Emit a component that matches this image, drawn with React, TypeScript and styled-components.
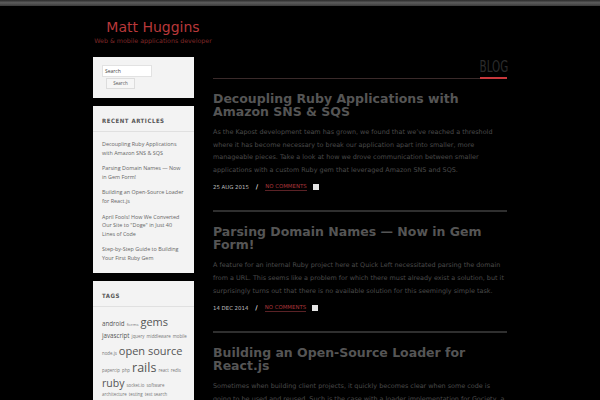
import React from 'react'
import styled, { createGlobalStyle } from 'styled-components'

const Global = createGlobalStyle`
  html, body {
    margin: 0;
    padding: 0;
    background: #000;
  }
  body {
    font-family: 'DejaVu Sans', sans-serif;
  }
`

const TopBar = styled.div`
  height: 6px;
  background: linear-gradient(180deg, #2a2a2a 0%, #5c5c5c 45%, #3a3a3a 100%);
`

const Page = styled.div`
  width: 414px;
  margin: 0 auto;
`

const Header = styled.header`
  width: 120px;
  padding-top: 11px;
  text-align: center;
`

const SiteTitle = styled.h1`
  margin: 0;
  font: 400 14px/20px 'DejaVu Sans', sans-serif;
  color: #b8383a;
`

const Tagline = styled.p`
  margin: 0;
  font: 400 6.3px/8px 'DejaVu Sans', sans-serif;
  color: #7e2828;
`

const Body = styled.div`
  display: flex;
  gap: 19px;
  padding-top: 12px;
`

const Sidebar = styled.aside`
  width: 101px;
  flex-shrink: 0;
  display: flex;
  flex-direction: column;
  gap: 8px;
`

const Widget = styled.section<{ $pad?: string }>`
  background: #f3f3f3;
  padding: ${({ $pad }) => $pad || '8px 9px'};
`

const SearchInput = styled.div`
  width: 46px;
  height: 10px;
  background: #fff;
  border: 1px solid #e2e2e2;
  font: 400 5px/10px 'Open Sans', sans-serif;
  color: #444;
  padding-left: 2px;
`

const SearchButton = styled.div`
  margin: 1px 0 0 4px;
  width: 27px;
  height: 9px;
  border: 1px solid #ddd;
  background: #f6f6f6;
  font: 400 4.6px/9px 'Open Sans', sans-serif;
  color: #555;
  text-align: center;
`

const WidgetTitle = styled.h3`
  margin: 0 -9px;
  padding: 11px 9px 6px;
  border-bottom: 1px solid #e0e0e0;
  font: 700 6px/8px 'DejaVu Sans Condensed', 'DejaVu Sans', sans-serif;
  font-stretch: condensed;
  letter-spacing: 0.55px;
  text-transform: uppercase;
  color: #555;
`

const ArticleList = styled.ul`
  list-style: none;
  margin: 0;
  padding: 8px 0 4px;
  display: flex;
  flex-direction: column;
  gap: 7px;
`

const ArticleLink = styled.li`
  font: 400 5.4px/8.6px 'Open Sans', sans-serif;
  color: #666;
`

const TagCloud = styled.div`
  padding: 9px 0 0;
  font-family: 'Open Sans', sans-serif;
  color: #555;
  line-height: 0;
`

const TagLine = styled.div<{ $h: number }>`
  height: ${({ $h }) => $h}px;
  display: flex;
  align-items: baseline;
  gap: 2px;
  white-space: nowrap;
`

const Tag = styled.span<{ $size: number }>`
  font-size: ${({ $size }) => $size}px;
  line-height: 1;
  color: ${({ $size }) => ($size < 5 ? '#777' : '#555')};
`

const Main = styled.main`
  flex: 1;
  min-width: 0;
`

const BlogHeader = styled.div`
  display: flex;
  justify-content: flex-end;
  border-bottom: 1px solid #3a2a2a;
`

const BlogLabel = styled.h2`
  margin: 0 0 -1px;
  width: 27px;
  border-bottom: 2px solid #c8383c;
  padding-bottom: 1px;
  font: 400 16px/19px 'DejaVu Sans Condensed', 'DejaVu Sans', sans-serif;
  color: #2c2c2c;
  text-align: center;
  white-space: nowrap;
  & > span {
    display: inline-block;
    transform: scaleX(0.72);
    transform-origin: center;
    margin: 0 -6px;
  }
`

const Post = styled.article<{ $last?: boolean }>`
  padding: 14px 0 19px;
  border-bottom: ${({ $last }) => ($last ? 'none' : '2px solid #2f2f2f')};
`

const PostTitle = styled.h2`
  margin: 0;
  font: 700 12.5px/12.5px 'DejaVu Sans', sans-serif;
  color: #555;
`

const Excerpt = styled.p`
  margin: 8px 0 0;
  font: 400 6.45px/12.6px 'DejaVu Sans', sans-serif;
  color: #4a4a4a;
`

const Meta = styled.div`
  margin-top: 7px;
  display: flex;
  align-items: center;
  gap: 4px;
  font: 400 5.4px/8px 'DejaVu Sans', sans-serif;
  text-transform: uppercase;
  color: #bbb;
`

const Slash = styled.span`
  color: #ddd;
  font-weight: 700;
  font-size: 6.5px;
  padding: 0 3px;
`

const Comments = styled.span`
  color: #a8353a;
  border-bottom: 1px solid #5a2226;
  line-height: 7px;
`

const CommentIcon = styled.span`
  display: inline-block;
  width: 6px;
  height: 6px;
  background: #e4e4e4;
  margin-left: 2px;
`

const articles = [
  'Decoupling Ruby Applications with Amazon SNS & SQS',
  'Parsing Domain Names — Now in Gem Form!',
  'Building an Open-Source Loader for React.js',
  'April Fools! How We Converted Our Site to "Doge" in Just 40 Lines of Code',
  'Step-by-Step Guide to Building Your First Ruby Gem',
]

const tagLines: { h: number; tags: [string, number][] }[] = [
  { h: 17, tags: [['android', 6.2], ['forms', 4.3], ['gems', 11]] },
  { h: 12, tags: [['javascript', 6.2], ['jquery', 4.4], ['middleware', 4.4], ['mobile', 4.4]] },
  { h: 17, tags: [['node.js', 4.4], ['open source', 11]] },
  { h: 16, tags: [['papercip', 4.4], ['php', 4.4], ['rails', 12.5], ['react', 4.4], ['redis', 4.4]] },
  { h: 14, tags: [['ruby', 10.5], ['socket.io', 4.4], ['software', 4.4]] },
  { h: 8, tags: [['architecture', 4.4], ['testing', 4.4], ['text search', 4.4]] },
]

const posts = [
  {
    title: 'Decoupling Ruby Applications with Amazon SNS & SQS',
    text: 'As the Kapost development team has grown, we found that we\u2019ve reached a threshold where it has become necessary to break our application apart into smaller, more manageable pieces. Take a look at how we drove communication between smaller applications with a custom Ruby gem that leveraged Amazon SNS and SQS.',
    date: '25 Aug 2015',
  },
  {
    title: 'Parsing Domain Names \u2014 Now in Gem Form!',
    text: 'A feature for an internal Ruby project here at Quick Left necessitated parsing the domain from a URL. This seems like a problem for which there must already exist a solution, but it surprisingly turns out that there is no available solution for this seemingly simple task.',
    date: '14 Dec 2014',
  },
  {
    title: 'Building an Open-Source Loader for React.js',
    text: 'Sometimes when building client projects, it quickly becomes clear when some code is going to be used and reused. Such is the case with a loader implementation for Gociety, a',
    date: '',
  },
]

export default function App() {
  return (
    <>
      <Global />
      <TopBar />
      <Page>
        <Header>
          <SiteTitle>Matt Huggins</SiteTitle>
          <Tagline>Web &amp; mobile applications developer</Tagline>
        </Header>
        <Body>
          <Sidebar>
            <Widget $pad='8px 9px 9px'>
              <SearchInput>Search</SearchInput>
              <SearchButton>Search</SearchButton>
            </Widget>
            <Widget $pad='0 9px 6px'>
              <WidgetTitle>Recent Articles</WidgetTitle>
              <ArticleList>
                {articles.map((a) => (
                  <ArticleLink key={a}>{a}</ArticleLink>
                ))}
              </ArticleList>
            </Widget>
            <Widget $pad='0 9px 0'>
              <WidgetTitle>Tags</WidgetTitle>
              <TagCloud>
                {tagLines.map((line, i) => (
                  <TagLine key={i} $h={line.h}>
                    {line.tags.map(([t, s]) => (
                      <Tag key={t} $size={s}>
                        {t}
                      </Tag>
                    ))}
                  </TagLine>
                ))}
              </TagCloud>
            </Widget>
          </Sidebar>
          <Main>
            <BlogHeader>
              <BlogLabel>
                <span>BLOG</span>
              </BlogLabel>
            </BlogHeader>
            {posts.map((p, i) => (
              <Post key={p.title} $last={i === posts.length - 1}>
                <PostTitle>{p.title}</PostTitle>
                <Excerpt>{p.text}</Excerpt>
                {p.date && (
                  <Meta>
                    <span>{p.date}</span>
                    <Slash>/</Slash>
                    <Comments>No Comments</Comments>
                    <CommentIcon />
                  </Meta>
                )}
              </Post>
            ))}
          </Main>
        </Body>
      </Page>
    </>
  )
}
